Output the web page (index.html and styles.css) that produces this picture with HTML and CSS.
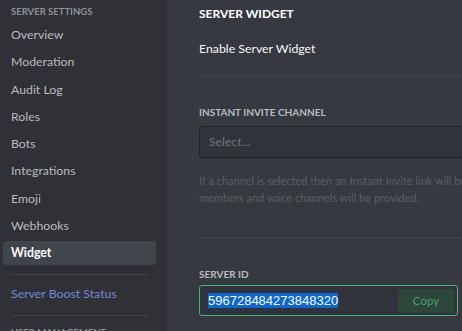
FILE: index.html
```html
<!DOCTYPE html>
<html lang="en">

<head>
    <meta charset="utf-8">
    <meta name="viewport" content="width=device-width, initial-scale=1.0">
    <title>Server Settings</title>
    <link rel="stylesheet" href="styles.css">
</head>

<body>
    <nav class="sidebar">
        <h2 class="side-header">Server Settings</h2>
        <a class="side-item">Overview</a>
        <a class="side-item">Moderation</a>
        <a class="side-item">Audit Log</a>
        <a class="side-item">Roles</a>
        <a class="side-item">Bots</a>
        <a class="side-item">Integrations</a>
        <a class="side-item">Emoji</a>
        <a class="side-item">Webhooks</a>
        <a class="side-item valgt">Widget</a>
        <div class="side-sep"></div>
        <a class="side-item boost">Server Boost Status</a>
        <div class="side-sep sep-2"></div>
        <h2 class="side-header">User Management</h2>
    </nav>

    <main class="content">
        <h1 class="title">Server Widget</h1>
        <p class="toggle-label">Enable Server Widget</p>
        <div class="divider"></div>

        <h3 class="label label-invite">Instant Invite Channel</h3>
        <div class="select">Select...</div>
        <p class="help">If a channel is selected then an Instant Invite link will be generated for your widget. Otherwise only online members and voice channels will be provided.</p>
        <div class="divider divider-2"></div>

        <h3 class="label label-id">Server ID</h3>
        <div class="copy-input">
            <span class="server-id"><span class="selected">596728484273848320</span></span>
            <button class="copy-btn">Copy</button>
        </div>
    </main>
</body>

</html>
```

FILE: styles.css
```css
html,
body {
    margin: 0;
    height: 100%;
}

body {
    display: flex;
    overflow: hidden;
    background-color: #36393f;
    font-family: Lato, "Open Sans", sans-serif;
}

.sidebar {
    width: 153px;
    flex: none;
    padding: 4px 11px 0 3px;
    background-color: #2f3136;
}

.side-header {
    margin: 0 0 3px 8px;
    font-size: 9.5px;
    line-height: 16px;
    font-weight: 700;
    text-transform: uppercase;
    color: #8e9297;
}

.side-item {
    display: block;
    height: 24px;
    line-height: 24px;
    padding: 0 8px;
    margin-bottom: 3.25px;
    border-radius: 3px;
    font-size: 12.3px;
    color: #b9bbbe;
}

.side-item.valgt {
    background-color: #40444b;
    color: #ffffff;
    font-weight: 700;
    margin-bottom: 0;
}

.side-item.boost {
    color: #7289da;
    margin-bottom: 0;
}

.side-sep {
    height: 1px;
    margin: 9px 8px 7px;
    background-color: #42454b;
}

.sep-2 {
    margin-top: 9px;
    margin-bottom: 9px;
}

.content {
    flex: none;
    width: 600px;
    padding-left: 32px;
}

.title {
    margin: 6px 0 0;
    font-size: 12px;
    line-height: 16px;
    font-weight: 700;
    text-transform: uppercase;
    color: #ffffff;
}

.toggle-label {
    margin: 18px 0 0;
    font-size: 12.3px;
    line-height: 18px;
    color: #f6f6f7;
}

.divider {
    height: 1px;
    margin-top: 17px;
    background-color: #42454a;
}

.label {
    margin: 0;
    font-size: 10px;
    line-height: 14px;
    font-weight: 700;
    text-transform: uppercase;
    color: #b9bbbe;
}

.label-invite {
    margin-top: 29px;
}

.select {
    width: 340px;
    height: 30px;
    margin-top: 7px;
    padding-left: 9px;
    line-height: 30px;
    border: 1px solid #222428;
    border-radius: 3px;
    background-color: #303339;
    font-size: 12.2px;
    color: #72767d;
}

.help {
    margin: 14px 0 0;
    width: 520px;
    font-size: 11px;
    line-height: 17px;
    color: #5c5f65;
}

.divider-2 {
    width: 360px;
    margin-top: 31px;
}

.label-id {
    margin-top: 29px;
}

.copy-input {
    display: flex;
    align-items: center;
    width: 257px;
    height: 29px;
    margin-top: 4px;
    border: 1px solid #43b581;
    border-radius: 3px;
    background-color: #303339;
}

.server-id {
    flex: 1;
    padding-left: 8px;
    font-family: "Liberation Sans", Arial, sans-serif;
    font-size: 13px;
    line-height: 11px;
}

.selected {
    background-color: #0b66d6;
    color: #ffffff;
}

.copy-btn {
    width: 56px;
    height: 24px;
    margin-right: 3px;
    padding: 0;
    border: none;
    border-radius: 3px;
    background-color: #2f463c;
    font-family: Lato, "Open Sans", sans-serif;
    font-size: 11.5px;
    color: #45a075;
}
```
